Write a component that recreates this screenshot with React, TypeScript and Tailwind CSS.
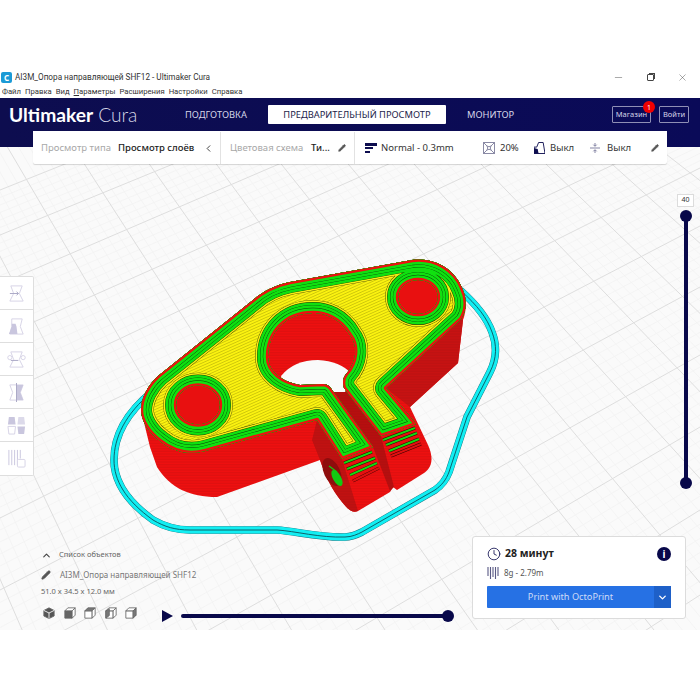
import React from 'react';
import { ChevronDown, ChevronLeft, ChevronUp, Pencil, Clock, Minus, X } from 'lucide-react';

// major grid lines of the build plate: [y at x=0, slope] and [x at y=165, slope]
const riseLines = [[190, -0.4], [235, -0.41], [284, -0.43], [337, -0.445], [395, -0.47], [453, -0.47], [518, -0.5], [590, -0.52], [665, -0.54], [747, -0.56], [840, -0.59], [944, -0.62], [1050, -0.65]];
const fallLines = [[-180, 2.3], [-114, 2.1], [-48, 1.9], [18, 1.7], [85, 1.55], [150, 1.42], [217, 1.36], [282, 1.25], [349, 1.19], [415, 1.1], [482, 1.04], [547, 0.97], [613, 0.9], [680, 0.78]];

const lerp = (a: number[], b: number[], t: number) => [a[0] + (b[0] - a[0]) * t, a[1] + (b[1] - a[1]) * t];

const minor = (lines: number[][]) => {
    const out: number[][] = [];
    for (let i = 0; i < lines.length - 1; i++) {
        for (let k = 1; k < 6; k++) out.push(lerp(lines[i], lines[i + 1], k / 6));
    }
    return out;
};

const riseEnds = ([c, s]: number[]) => ({ x1: 0, y1: c, x2: 700, y2: c + s * 700 });
const fallEnds = ([x, s]: number[]) => ({ x1: x - 100 / s, y1: 65, x2: x + 565 / s, y2: 730 });

const Grid = () => (
    <g>
        {minor(riseLines).map((l, i) => <line key={i} {...riseEnds(l)} stroke="#f3f3f3" strokeWidth="0.8" />)}
        {minor(fallLines).map((l, i) => <line key={i} {...fallEnds(l)} stroke="#f3f3f3" strokeWidth="0.8" />)}
        {riseLines.map((l, i) => <line key={i} {...riseEnds(l)} stroke="#dedede" strokeWidth="1" />)}
        {fallLines.map((l, i) => <line key={i} {...fallEnds(l)} stroke="#dedede" strokeWidth="1" />)}
    </g>
);

const outer = 'M141,410 C141,398 148,385 158,376 L253,300 C262,292 275,285 290,282 L412,260 C435,257 455,270 462,288 C468,300 466,312 461,319 L386,388 L416,424 L381,436 L344,388 C342,382 343,378 346,374 C357,362 358,345 350,335 C340,318 325,313 313,313 C285,313 268,333 268,357 C268,372 283,382 300,385 L322,384 C327,384 330,386 332,390 L373,447 L342,459 L317,420 L205,451 C190,455 175,453 160,441 C148,432 141,420 141,410 Z';
const holes = 'M176,405 a22,19.5 0 1,0 44,0 a22,19.5 0 1,0 -44,0 Z M398,297 a20,17 0 1,0 40,0 a20,17 0 1,0 -40,0 Z';
const face = `${outer} ${holes}`;
const body = 'M141,410 C141,398 148,385 158,376 L253,300 C262,292 275,285 290,282 L412,260 C435,257 455,270 462,288 C468,300 466,312 463,320 L458,363 L410,407 L428,445 C434,458 432,468 424,473 L397,490 L393,487 L390,492 L358,511 C352,514 347,508 342,502 C332,490 325,475 320,460 L217,497 C190,497 170,488 157,467 L150,447 Z';
const skirt = 'M152,392 C125,414 114,438 114,460 C114,480 125,500 153,520 C165,527 175,530 190,530 L277,530 C295,531 320,538 345,537 C352,537 358,534 362,532 L435,490 C442,485 446,480 449,472 L467,417 L490,372 C497,358 497,345 492,332 C487,318 478,306 460,290';

const bands: [number, string][] = [[25.6, '#2a2a00'], [25, '#f8ee14'], [22, '#223300'], [21.2, '#10e010'], [16, '#0a3a0a'], [15.3, '#10e010'], [10.4, '#0a3a0a'], [9.7, '#10e010'], [4.4, '#ee1010']];

const stripes = [
    [383, 440, 415, 428], [386, 445, 417, 433], [389, 451, 419, 439], [391, 456, 421, 444],
    [344, 463, 372, 452], [347, 469, 375, 458], [350, 475, 377, 463], [353, 481, 379, 468],
];

const Model = () => (
    <g>
        <path d={skirt} fill="none" stroke="#17707c" strokeWidth="7.6" />
        <path d={skirt} fill="none" stroke="#12eef2" strokeWidth="6.8" />
        <path d={skirt} fill="none" stroke="#10505a" strokeWidth="0.9" />

        {/* walls */}
        <path d={body} fill="#f01010" />
        <path d="M461,319 L463,320 L458,363 L410,407 L386,388 Z" fill="#c81212" />
        <path d="M317,420 L342,459 L358,511 C352,514 347,508 342,502 C332,490 325,475 320,460 L312,440 Z" fill="#c21111" />
        <path d="M344,388 L381,436 L394,487 L390,491 L373,447 L332,390 Z" fill="#b80f0f" />
        <path d={body} fill="url(#layers)" />

        <ellipse cx="332" cy="472" rx="8" ry="15" transform="rotate(-25 332 472)" fill="#8e0d0d" />
        <ellipse cx="337" cy="478" rx="4" ry="9" transform="rotate(-30 337 478)" fill="#12c812" />
        <line x1="329" y1="466" x2="337" y2="472" stroke="#12c812" strokeWidth="1.4" />
        <ellipse cx="198" cy="405" rx="22" ry="20" fill="#e81010" />
        <ellipse cx="418" cy="297" rx="20" ry="17" fill="#e81010" />

        {/* view through the big hole */}
        <path d="M281,376 Q294,360 318,360 Q340,361 352,374 L345,392 L285,392 Z" fill="#fafafa" />

        {/* top layer */}
        <path d={face} fillRule="evenodd" fill="url(#hatch)" />
        <g clipPath="url(#face)">
            {bands.map(([w, c], i) => <path key={i} d={face} fill="none" stroke={c} strokeWidth={w} strokeLinejoin="round" />)}
        </g>
        {stripes.map(([a, b, c, d], i) => (
            <g key={i}>
                <line x1={a} y1={b} x2={c} y2={d} stroke="#300" strokeWidth="3" />
                <line x1={a} y1={b} x2={c} y2={d} stroke={i % 4 === 3 ? '#e01010' : '#12d612'} strokeWidth="2" />
            </g>
        ))}
    </g>
);

const stroke = '#d6d3e6';
const fill = '#c9c6de';

const toolIcons = [
    <><path d="M4 2h12l-3 8 4 8H3l4-8z" fill="none" stroke={stroke} /><path d="M3 10h9m-2-2l2 2-2 2" fill="none" stroke="#a9a6c4" /></>,
    <><path d="M5 2h11l-2 8 3 8H3l2-8z" fill="none" stroke={stroke} /><path d="M5 7h4l1 3 1 8H2l3-8z" fill={fill} /></>,
    <><path d="M4 2h12l-3 8 4 8H3l4-8z" fill="none" stroke={stroke} /><circle cx="3" cy="8" r="2.2" fill="#fff" stroke={stroke} /><circle cx="17" cy="8" r="2.2" fill="#fff" stroke={stroke} /><path d="M4 11h8" stroke="#a9a6c4" /></>,
    <><path d="M3 2h14l-3 8 3 8H3l3-8z" fill="none" stroke={stroke} /><path d="M10 2h7l-3 8 3 8h-7z" fill={fill} /><path d="M10 0v20" stroke="#a9a6c4" /></>,
    <><path d="M2 1h6l1 8H1z" fill={fill} /><path d="M12 1h6l1 8h-8z" fill="#dcdaea" /><path d="M1 11h8l-1 8H2z" fill="none" stroke={stroke} /><path d="M11 11h8l-1 8h-6z" fill={fill} /></>,
    <><path d="M2 1v16M5 1v16M8 1v16M11 1v16M14 1v9" stroke={fill} /><rect x="11" y="11" width="8" height="8" rx="1" fill="#fff" stroke={stroke} /></>,
];

const CubeIcon = ({ kind }: { kind: number }) => (
    <svg viewBox="0 0 14 14" className="w-[12px] h-[12px]" fill="none" stroke="#666" strokeWidth="1">
        {kind === 0 ? (
            <>
                <path d="M7 1l6 3v6.5L7 13.5l-6-3V4z" fill="#555" />
                <path d="M1 4l6 3 6-3M7 7v6.5" stroke="#fff" />
            </>
        ) : (
            <>
                <path d="M1 4.5h8.5V13H1z" fill={kind === 1 ? '#666' : '#fff'} />
                <path d="M1 4.5L4.5 1H13L9.5 4.5z" fill={kind === 2 ? '#777' : '#fff'} />
                <path d="M9.5 4.5L13 1v8.5L9.5 13z" fill={kind === 4 ? '#777' : '#fff'} />
                {kind === 3 && <path d="M1 4.5L5 2v8L1 13z" fill="#777" />}
            </>
        )}
    </svg>
);

const App: React.FC = () => {
    return (
        <div className="w-[700px] h-[700px] bg-white pt-[70px] overflow-hidden font-['Noto_Sans','Open_Sans',sans-serif] text-[#1a1a1a]">
            <div className="h-[15px] flex items-center pl-[1px]">
                <span className="w-[11px] h-[11px] rounded-[2px] bg-[#1b9ad6] flex items-center justify-center text-white text-[8px] font-bold leading-none">C</span>
                <span className="ml-[3px] font-['Roboto',sans-serif] text-[8.2px] leading-none text-[#333]">AI3M_Опора направляющей SHF12 - Ultimaker Cura</span>
                <div className="ml-auto flex items-center text-[#444]">
                    <Minus size={11} strokeWidth={1} />
                    <span className="relative ml-[23px] w-[7px] h-[7px] border border-[#444] rounded-[1px] bg-white">
                        <span className="absolute -top-[2px] left-[1px] w-[6px] h-[6px] border-t border-r border-[#444]"></span>
                    </span>
                    <X size={11} strokeWidth={1} className="ml-[23px] mr-[12px]" />
                </div>
            </div>
            <div className="h-[13px] flex items-center pl-[2px] gap-[4px] font-['Roboto',sans-serif] text-[7.7px] leading-none text-[#333]">
                <span>Файл</span><span>Правка</span><span>Вид</span><span><u>П</u>араметры</span><span>Расширения</span><span>Настройки</span><span>Справка</span>
            </div>

            <div className="relative">
                <header className="h-[49px] bg-gradient-to-r from-[#0d0d4f] to-[#0a0a58] flex items-start pt-[7px] pl-[9px] pr-[11px]">
                    <div className="w-[176px] h-[19px] flex items-center font-['Lato',sans-serif] text-[19.2px] leading-none text-white">
                        <span className="font-bold">Ultimaker</span>
                        <span className="ml-[5px] font-light text-[#d5d5e5]">Cura</span>
                    </div>
                    <div className="w-[83px] h-[19px] flex items-center text-[9.3px] text-[#d5d5e8]">ПОДГОТОВКА</div>
                    <div className="w-[178px] h-[19px] flex items-center justify-center bg-white rounded-[1px] text-[9.3px] text-[#1d1d4a]">ПРЕДВАРИТЕЛЬНЫЙ ПРОСМОТР</div>
                    <div className="ml-[21px] h-[19px] flex items-center text-[9.3px] text-[#d5d5e8]">МОНИТОР</div>
                    <div className="ml-auto flex items-center gap-[8px] mt-[1px]">
                        <div className="relative w-[39px] h-[17px] border border-[#8f8fb5] rounded-[1px] flex items-center justify-center text-[7.5px] text-[#d5d5e8]">
                            Магазин
                            <span className="absolute -top-[6px] -right-[5px] w-[12px] h-[12px] rounded-full bg-[#f00000] flex items-center justify-center text-[7px] text-white leading-none">1</span>
                        </div>
                        <div className="w-[30px] h-[17px] border border-[#8f8fb5] rounded-[1px] flex items-center justify-center text-[7.5px] text-[#d5d5e8]">Войти</div>
                    </div>
                </header>

                <div className="relative h-[483px] bg-[#fafafa] overflow-hidden">
                    <svg viewBox="0 147 700 483" className="block w-full h-full">
                        <defs>
                            <pattern id="hatch" width="2.6" height="2.6" patternUnits="userSpaceOnUse" patternTransform="rotate(-24)">
                                <rect width="2.6" height="2.6" fill="#fbf210" />
                                <rect width="2.6" height="0.35" fill="#8a8400" />
                            </pattern>
                            <pattern id="layers" width="3" height="1.6" patternUnits="userSpaceOnUse">
                                <rect width="3" height="0.5" fill="#8d0c0c" opacity="0.3" />
                            </pattern>
                            <clipPath id="face"><path d={face} clipRule="evenodd" /></clipPath>
                        </defs>
                        <Grid />
                        <Model />
                    </svg>
                </div>

                {/* view settings bar */}
                <div className="absolute left-[33px] top-[33px] w-[634px] h-[33px] bg-white rounded-b-[2px] shadow-[0_1px_1px_rgba(0,0,0,0.15)] flex items-center pt-[1px] text-[9.5px] text-[#222] whitespace-nowrap">
                    <div className="w-[188px] h-full flex items-center pl-[8px] border-r border-[#e2e2e2]">
                        <span className="w-[77px] text-[#a8a8a8]">Просмотр типа</span>
                        <span className="font-medium">Просмотр слоёв</span>
                        <ChevronLeft size={11} strokeWidth={2} className="ml-auto mr-[6px] text-[#333]" />
                    </div>
                    <div className="w-[134px] h-full flex items-center pl-[9px] border-r border-[#e2e2e2]">
                        <span className="w-[81px] text-[#a8a8a8]">Цветовая схема</span>
                        <span className="font-medium">Ти...</span>
                        <Pencil size={8} fill="#555" className="ml-auto mr-[8px] text-[#555]" />
                    </div>
                    <div className="flex-1 h-full flex items-center pl-[10px] text-[#333]">
                        <svg viewBox="0 0 12 11" className="w-[12px] h-[11px]" fill="#0d0d4f"><rect width="12" height="3" /><rect y="4" width="8" height="2" /><rect y="8" width="5" height="2" /></svg>
                        <span className="ml-[4px] w-[71px]">Normal - 0.3mm</span>
                        <svg viewBox="0 0 12 12" className="ml-[31px] w-[12px] h-[12px]" fill="none" stroke="#8a8aa5" strokeWidth="1"><rect x="0.5" y="0.5" width="11" height="11" /><path d="M1 1l3 3M11 1L8 4M1 11l3-3M11 11L8 8M4 4q2 1.5 4 0q-1.5 2 0 4q-2-1.5-4 0q1.5-2 0-4" /></svg>
                        <span className="ml-[5px] w-[19px]">20%</span>
                        <svg viewBox="0 0 12 12" className="ml-[15px] w-[11px] h-[12px]"><path d="M5 0h5l2 12H0V5h3z" fill="#fff" stroke="#0d0d4f" /><path d="M0 6l4 1 1 5H0z" fill="#0d0d4f" /></svg>
                        <span className="ml-[5px] w-[24px]">Выкл</span>
                        <svg viewBox="0 0 12 12" className="ml-[16px] w-[10px] h-[12px]" fill="none" stroke="#6a6a90"><path d="M0 6h12M6 0v3.5M6 8.5V12M4 2l2 2 2-2M4 10l2-2 2 2" /></svg>
                        <span className="ml-[7px]">Выкл</span>
                        <Pencil size={8} fill="#555" className="ml-auto mr-[8px] text-[#555]" />
                    </div>
                </div>

                {/* tool column */}
                <div className="absolute left-0 top-[178px] w-[34px] bg-white border border-l-0 border-[#dedede] rounded-r-[2px] flex flex-col">
                    {toolIcons.map((icon, i) => (
                        <div key={i} className="h-[33px] flex items-center justify-center border-b border-[#dedede] last:border-b-0">
                            <svg viewBox="0 0 20 20" className="w-[19px] h-[19px]">{icon}</svg>
                        </div>
                    ))}
                </div>

                {/* layer slider */}
                <div className="absolute left-[677px] top-[96px] w-[17px] h-[13px] bg-white border border-[#dcdcdc] flex items-center justify-center text-[7px] text-[#333]">40</div>
                <div className="absolute left-[680px] top-[112px] w-[12px] h-[279px] flex flex-col items-center">
                    <span className="w-[12px] h-[12px] rounded-full bg-[#08084a]"></span>
                    <span className="flex-1 w-[4px] bg-[#08084a] -my-[1px]"></span>
                    <span className="w-[12px] h-[12px] rounded-full bg-[#08084a]"></span>
                </div>

                {/* object list */}
                <div className="absolute left-[41px] top-[450px] text-[#777] flex flex-col">
                    <div className="h-[14px] flex items-center text-[7.5px] text-[#666]">
                        <ChevronUp size={11} strokeWidth={2.5} className="text-[#444]" />
                        <span className="ml-[7px]">Список объектов</span>
                    </div>
                    <div className="h-[12px] mt-[7px] flex items-center text-[8px] text-[#777]">
                        <Pencil size={10} fill="#555" className="text-[#555]" />
                        <span className="ml-[9px]">AI3M_Опора направляющей SHF12</span>
                    </div>
                    <div className="mt-[5px] h-[11px] flex items-center text-[7.5px] text-[#666]">51.0 x 34.5 x 12.0 мм</div>
                    <div className="mt-[10px] ml-[2px] flex items-center gap-[8.5px]">
                        {[0, 1, 2, 3, 4].map((n) => <CubeIcon key={n} kind={n} />)}
                    </div>
                </div>

                {/* playback */}
                <div className="absolute left-[162px] top-[512px] w-[292px] flex items-center">
                    <svg viewBox="0 0 11 12" className="w-[11px] h-[12px]" fill="#08084a"><path d="M0 0l11 6-11 6z" /></svg>
                    <span className="ml-[8px] flex-1 h-[4px] bg-[#08084a] rounded-l-[2px]"></span>
                    <span className="-ml-[1px] w-[12px] h-[12px] rounded-full bg-[#08084a]"></span>
                </div>

                {/* print card */}
                <div className="absolute left-[472px] top-[438px] w-[214px] h-[83px] bg-white border border-[#dcdcdc] rounded-[3px] px-[14px] pt-[10px]">
                    <div className="flex items-center h-[14px]">
                        <Clock size={14} strokeWidth={1.4} className="text-[#0d0d4f]" />
                        <span className="ml-[4px] text-[10.5px] font-bold text-[#222]">28 минут</span>
                        <span className="ml-auto w-[14px] h-[14px] rounded-full bg-[#08084a] flex items-center justify-center text-white text-[10px] font-bold leading-none">i</span>
                    </div>
                    <div className="flex items-center h-[12px] mt-[6px]">
                        <svg viewBox="0 0 12 12" className="w-[12px] h-[12px]" stroke="#5a5a85" strokeWidth="1.1"><path d="M1 0v9M3.5 0v12M6 0v10M8.5 0v12M11 0v9" /></svg>
                        <span className="ml-[5px] text-[8px] text-[#555]">8g - 2.79m</span>
                    </div>
                    <div className="mt-[7px] h-[22px] flex bg-[#2671e4] rounded-[1px]">
                        <span className="flex-1 flex items-center justify-center text-[9.2px] text-[#cddcf8]">Print with OctoPrint</span>
                        <span className="w-[17px] bg-[#1e60c8] flex items-center justify-center text-white"><ChevronDown size={11} strokeWidth={3} /></span>
                    </div>
                </div>
            </div>
        </div>
    );
};

export default App;
